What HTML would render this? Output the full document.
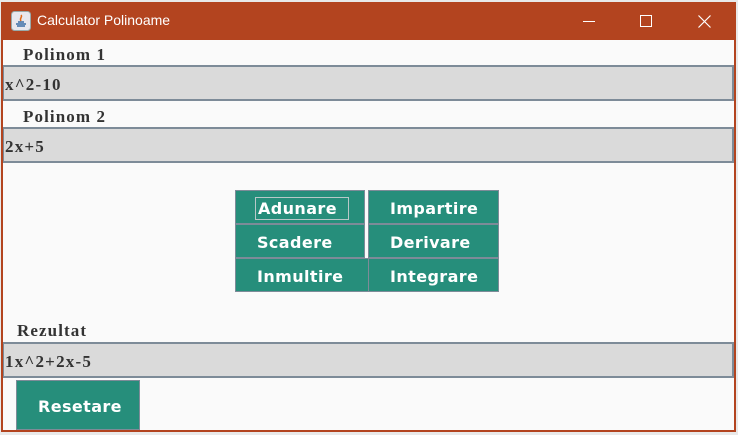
<!DOCTYPE html>
<html><head><meta charset="utf-8"><style>
*{margin:0;padding:0;box-sizing:border-box}
body{width:738px;height:435px;background:#e9e9e9;position:relative;overflow:hidden;font-family:"Liberation Serif",serif}
.win{position:absolute;left:1px;top:2px;width:735px;height:430px;background:#b3441f;}
.content{position:absolute;left:3px;top:40px;width:731px;height:390px;background:#fafafa}
.title{position:absolute;left:37px;top:12px;color:#fff;font:14px "Liberation Sans",sans-serif}
.lbl{position:absolute;font-weight:bold;font-size:17px;color:#333;letter-spacing:1.1px}
.fld{position:absolute;left:3px;width:731px;height:36px;background:#dadada;border-top:2px solid #7d8b98;border-right:2px solid #7d8b98;border-bottom:2px solid #7d8b98;border-left:1px solid #7d8b98;font-weight:bold;font-size:17px;letter-spacing:1.2px;color:#333;padding-left:1px;line-height:36px}
.btn{position:absolute;background:#268e7b;border:1px solid #7d8b98;color:#fff;font:bold 16px "DejaVu Sans",Verdana,sans-serif;letter-spacing:0.4px;line-height:35px;padding-left:21px}
</style></head><body>
<div class="win"></div>
<svg style="position:absolute;left:11px;top:11px" width="20" height="20"><rect x="0.5" y="0.5" width="19" height="19" rx="3" fill="#e8e8ee" stroke="#9aa"/><path d="M5 13h10M6 15h8M7 11h6" stroke="#3a6ea5" stroke-width="1.5"/><path d="M10 4c2 2-2 3 0 6" stroke="#e06a1a" stroke-width="1.5" fill="none"/></svg>
<div class="title">Calculator Polinoame</div>
<div style="position:absolute;left:583px;top:21px;width:12px;height:1px;background:#fff"></div>
<div style="position:absolute;left:640px;top:15px;width:12px;height:12px;border:1px solid #fff"></div>
<svg style="position:absolute;left:698px;top:15px" width="13" height="13"><path d="M0.5 0.5L12.5 12.5M12.5 0.5L0.5 12.5" stroke="#fff" stroke-width="1.2"/></svg>
<div class="content"></div>
<div class="lbl" style="left:23px;top:45px">Polinom 1</div>
<div class="fld" style="top:65px">x^2-10</div>
<div class="lbl" style="left:23px;top:107px">Polinom 2</div>
<div class="fld" style="top:127px">2x+5</div>
<div class="btn" style="left:235px;top:190px;width:130px;height:34px"><span style="outline:1px solid #b8c8c8;outline-offset:1px;padding:0 10px 0 1px">Adunare</span></div>
<div class="btn" style="left:368px;top:190px;width:131px;height:34px">Impartire</div>
<div class="btn" style="left:235px;top:224px;width:130px;height:34px">Scadere</div>
<div class="btn" style="left:368px;top:224px;width:131px;height:34px">Derivare</div>
<div class="btn" style="left:235px;top:258px;width:134px;height:34px">Inmultire</div>
<div class="btn" style="left:368px;top:258px;width:131px;height:34px">Integrare</div>
<div class="lbl" style="left:17px;top:321px">Rezultat</div>
<div class="fld" style="top:342px">1x^2+2x-5</div>
<div class="btn" style="left:16px;top:380px;width:124px;height:50px;line-height:52px">Resetare</div>
</body></html>
